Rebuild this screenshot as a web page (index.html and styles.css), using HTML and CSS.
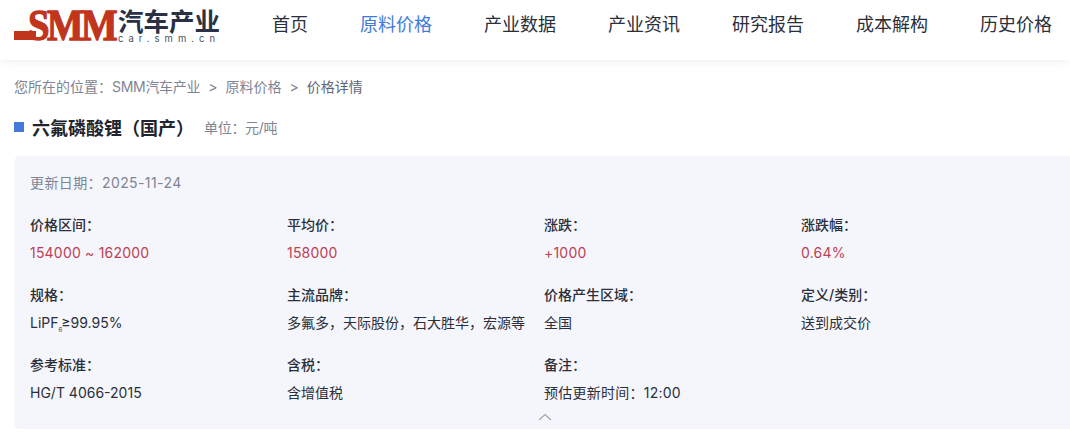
FILE: index.html
```html
<!DOCTYPE html>
<html lang="zh-CN">
<head>
<meta charset="UTF-8">
<meta name="viewport" content="width=device-width, initial-scale=1.0">
<title>六氟磷酸锂（国产）</title>
<link rel="stylesheet" href="styles.css">
</head>
<body>
<header class="header">
    <a class="logo">
        <span class="logo-mark"><span class="logo-bar"></span><span class="logo-smm">SMM</span></span>
        <span class="logo-side">
            <span class="logo-cn">汽车产业</span>
            <span class="logo-url">car.smm.cn</span>
        </span>
    </a>
    <nav class="nav">
        <a>首页</a>
        <a class="active">原料价格</a>
        <a>产业数据</a>
        <a>产业资讯</a>
        <a>研究报告</a>
        <a>成本解构</a>
        <a>历史价格</a>
    </nav>
</header>

<div class="crumbs">
    <span>您所在的位置：</span><span class="home">SMM汽车产业</span>
    <span class="sep">&gt;</span><span>原料价格</span>
    <span class="sep">&gt;</span><span class="current">价格详情</span>
</div>

<div class="title-row">
    <span class="title-mark"></span>
    <h1>六氟磷酸锂（国产）</h1>
    <span class="unit">单位：元/吨</span>
</div>

<section class="card">
    <div class="updated">更新日期：2025-11-24</div>
    <div class="grid">
        <div class="item"><div class="label">价格区间：</div><div class="value red">154000 ~ 162000</div></div>
        <div class="item"><div class="label">平均价：</div><div class="value red">158000</div></div>
        <div class="item"><div class="label">涨跌：</div><div class="value red">+1000</div></div>
        <div class="item"><div class="label">涨跌幅：</div><div class="value red">0.64%</div></div>

        <div class="item"><div class="label">规格：</div><div class="value">LiPF<sub>6</sub>≥99.95%</div></div>
        <div class="item"><div class="label">主流品牌：</div><div class="value">多氟多，天际股份，石大胜华，宏源等</div></div>
        <div class="item"><div class="label">价格产生区域：</div><div class="value">全国</div></div>
        <div class="item"><div class="label">定义/类别：</div><div class="value">送到成交价</div></div>

        <div class="item"><div class="label">参考标准：</div><div class="value">HG/T 4066-2015</div></div>
        <div class="item"><div class="label">含税：</div><div class="value">含增值税</div></div>
        <div class="item"><div class="label">备注：</div><div class="value note">预估更新时间：12:00</div></div>
    </div>
    <svg class="collapse" width="14" height="8" viewBox="0 0 14 8" fill="none">
        <path d="M1 7L7 1.5L13 7" stroke="#9aa3b5" stroke-width="1.2"/>
    </svg>
</section>
</body>
</html>
```

FILE: styles.css
```css
html, body {
    margin: 0;
    padding: 0;
    height: 441px;
    overflow: hidden;
}
body {
    font-family: Inter, "Noto Sans CJK SC", sans-serif;
    background-color: #fff;
    color: #2b2f3a;
}
.header {
    display: flex;
    justify-content: space-between;
    align-items: flex-start;
    height: 60px;
    padding: 0 18px 0 14px;
    background-color: #fff;
    box-shadow: 0 2px 8px rgba(0, 0, 0, 0.06);
}

/* Logo */
.logo {
    display: flex;
    align-items: flex-start;
    height: 30px;
    margin-top: 10px;
}
.logo-mark {
    display: flex;
    align-items: flex-end;
    width: 101px;
    height: 30px;
}
.logo-bar {
    flex: none;
    width: 22px;
    height: 9px;
    margin-right: -8px;
    background-color: #c0351c;
}
.logo-smm {
    flex: none;
    font-family: "Liberation Serif", serif;
    font-size: 45px;
    font-weight: bold;
    line-height: 30px;
    letter-spacing: -3px;
    color: #c0351c;
    -webkit-text-stroke: 1.4px #c0351c;
    transform: scaleX(0.86);
    transform-origin: left center;
}
.logo-side {
    display: flex;
    flex-direction: column;
    margin-left: 3px;
}
.logo-cn {
    font-size: 25.5px;
    font-weight: 700;
    line-height: 23px;
    white-space: nowrap;
    color: #2a3145;
}
.logo-url {
    margin-top: 1px;
    font-size: 9.5px;
    line-height: 10px;
    letter-spacing: 5px;
    white-space: nowrap;
    color: #4a5163;
}

/* Nav */
.nav {
    display: flex;
    gap: 52px;
    margin-top: 13px;
}
.nav a {
    font-size: 18px;
    line-height: 24px;
    color: #2b2f3a;
}
.nav a.active {
    color: #3f7bdc;
}

.crumbs {
    display: flex;
    align-items: center;
    margin: 17px 0 0 14px;
    font-size: 14px;
    line-height: 20px;
    color: #7d8595;
}
.crumbs .home {
    letter-spacing: -0.3px;
}
.crumbs .sep {
    margin: 0 8px;
}
.crumbs .current {
    color: #5f6675;
}

.title-row {
    display: flex;
    align-items: center;
    margin: 18px 0 0 14px;
    height: 24px;
}
.title-mark {
    width: 10px;
    height: 10px;
    margin-right: 8px;
    background-color: #4379d8;
}
.title-row h1 {
    margin: 0;
    font-size: 18px;
    font-weight: 700;
    color: #20242e;
}
.unit {
    margin-left: 10px;
    font-size: 14px;
    letter-spacing: -0.3px;
    color: #7d8595;
}

.card {
    position: relative;
    box-sizing: border-box;
    width: 1064px;
    height: 273px;
    margin: 17px 0 0 14px;
    padding: 17px 16px 0;
    background-color: #f5f6fc;
    border-radius: 6px;
}
.updated {
    font-size: 14px;
    line-height: 20px;
    letter-spacing: 0.4px;
    color: #7d8595;
}
.grid {
    display: grid;
    grid-template-columns: repeat(4, 257px);
    margin-top: 22px;
}
.item {
    height: 70px;
}
.label {
    font-size: 14px;
    font-weight: 500;
    line-height: 20px;
    color: #2b2f3a;
}
.value {
    margin-top: 8px;
    font-size: 14px;
    line-height: 20px;
    color: #2b2f3a;
}
.value sub {
    margin-right: -1px;
    font-size: 6px;
    line-height: 0;
}
.value.red {
    letter-spacing: 0.2px;
    color: #bd4052;
}
.value.note {
    letter-spacing: 0.25px;
}
.collapse {
    position: absolute;
    left: 524px;
    top: 257px;
}
```
